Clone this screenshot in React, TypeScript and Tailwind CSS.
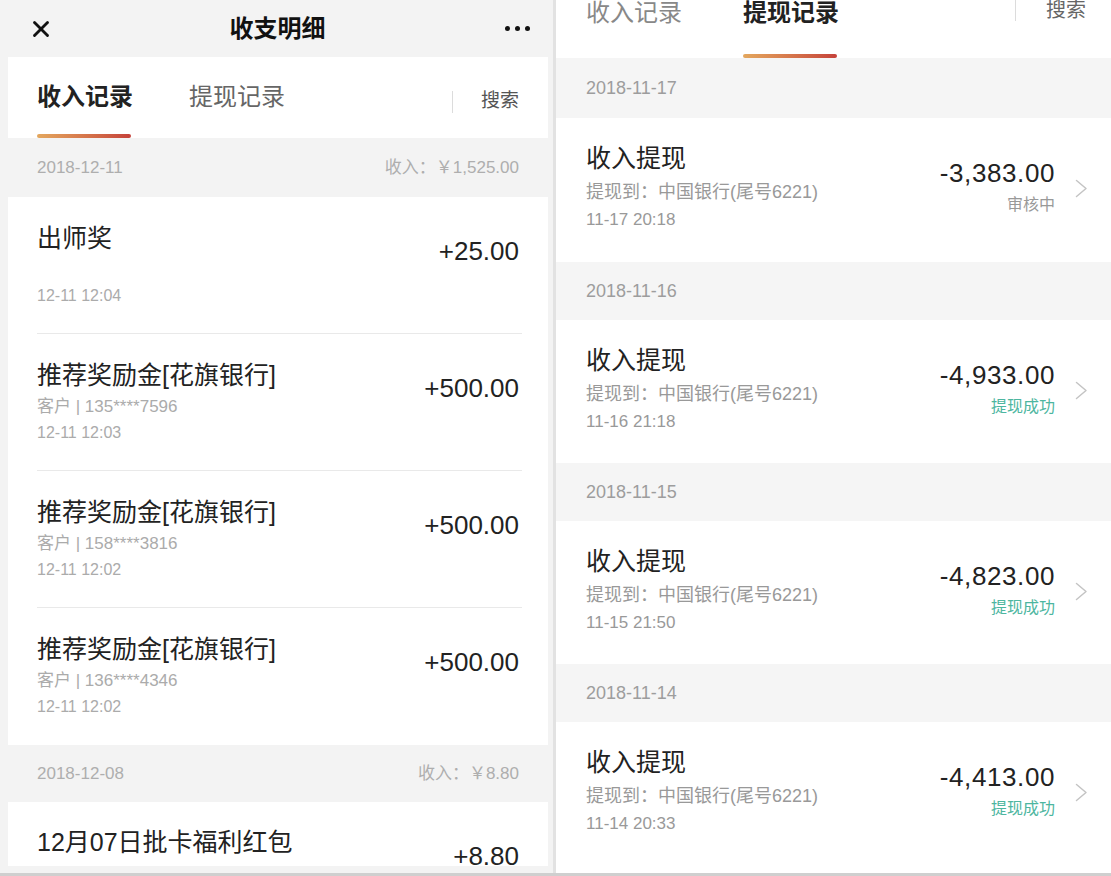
import { X } from "lucide-react";

const font = "font-['Liberation_Sans','Noto_Sans_CJK_SC',sans-serif]";

interface IncomeItem {
  title: string;
  sub?: string;
  time: string;
  amount: string;
}

interface Withdrawal {
  date: string;
  time: string;
  amount: string;
  status: string;
  ok: boolean;
  dateH: string;
  itemH: string;
}

const incomeA: IncomeItem[] = [
  { title: "出师奖", time: "12-11 12:04", amount: "+25.00" },
  { title: "推荐奖励金[花旗银行]", sub: "客户 | 135****7596", time: "12-11 12:03", amount: "+500.00" },
  { title: "推荐奖励金[花旗银行]", sub: "客户 | 158****3816", time: "12-11 12:02", amount: "+500.00" },
  { title: "推荐奖励金[花旗银行]", sub: "客户 | 136****4346", time: "12-11 12:02", amount: "+500.00" },
];

const withdrawals: Withdrawal[] = [
  { date: "2018-11-17", time: "11-17 20:18", amount: "-3,383.00", status: "审核中", ok: false, dateH: "h-[60px]", itemH: "h-[144px]" },
  { date: "2018-11-16", time: "11-16 21:18", amount: "-4,933.00", status: "提现成功", ok: true, dateH: "h-[58px]", itemH: "h-[143px]" },
  { date: "2018-11-15", time: "11-15 21:50", amount: "-4,823.00", status: "提现成功", ok: true, dateH: "h-[58px]", itemH: "h-[143px]" },
  { date: "2018-11-14", time: "11-14 20:33", amount: "-4,413.00", status: "提现成功", ok: true, dateH: "h-[58px]", itemH: "h-[151px]" },
];

const Underline = () => (
  <div className="h-[4px] w-[94px] rounded-full bg-gradient-to-r from-[#e3a75e] to-[#c5413a]" />
);

const IncomeRow = ({ item, last }: { item: IncomeItem; last?: boolean }) => (
  <div className={`flex justify-between h-[137px] ${last ? "" : "border-b border-[#e9e9e9]"}`}>
    <div className="flex flex-col pt-[27px]">
      <div className="text-[25px] leading-[28px] text-[#222]">{item.title}</div>
      <div className="mt-[6px] h-[24px] text-[17px] leading-[24px] text-[#ababab]">{item.sub}</div>
      <div className="mt-[3px] text-[16px] leading-[22px] text-[#ababab]">{item.time}</div>
    </div>
    <div className="pt-[40px] mr-[3px] text-[26px] leading-[28px] text-[#222]">{item.amount}</div>
  </div>
);

const Chevron = () => (
  <svg width="13" height="19" viewBox="0 0 13 19" fill="none">
    <path d="M1.5 1.5 L11 9.5 L1.5 17.5" stroke="#c4c4c4" strokeWidth="1.5" strokeLinecap="round" strokeLinejoin="round" />
  </svg>
);

const LeftPanel = () => (
  <div className="w-[553px] h-full bg-[#f3f3f3] flex flex-col overflow-hidden">
    {/* nav bar */}
    <div className="h-[57px] shrink-0 flex items-center justify-between pl-[28px] pr-[23px]">
      <X size={26} strokeWidth={2.6} className="text-[#111]" />
      <div className="text-[24px] font-bold text-[#111] leading-[28px] -ml-[4px]">收支明细</div>
      <div className="flex gap-[5px] items-center">
        <span className="w-[5px] h-[5px] rounded-full bg-[#111]" />
        <span className="w-[5px] h-[5px] rounded-full bg-[#111]" />
        <span className="w-[5px] h-[5px] rounded-full bg-[#111]" />
      </div>
    </div>

    {/* tabs */}
    <div className="ml-[8px] mr-[5px] h-[81px] shrink-0 bg-white flex pl-[29px] pr-[29px]">
      <div className="flex flex-col">
        <div className="pt-[26px] text-[24px] leading-[28px] font-bold text-[#222]">收入记录</div>
        <div className="mt-auto">
          <Underline />
        </div>
      </div>
      <div className="ml-[56px] pt-[26px] text-[24px] leading-[28px] text-[#666]">提现记录</div>
      <div className="ml-auto flex items-center gap-[28px] pt-[8px]">
        <div className="w-px h-[22px] bg-[#dcdcdc]" />
        <div className="text-[19px] text-[#555]">搜索</div>
      </div>
    </div>

    <div className="h-[59px] shrink-0 flex items-center justify-between pl-[37px] pr-[34px] text-[17px] text-[#aeaeae]">
      <span>2018-12-11</span>
      <span>收入：￥1,525.00</span>
    </div>

    <div className="ml-[8px] mr-[5px] bg-white pl-[29px] pr-[26px] shrink-0">
      {incomeA.map((it, i) => (
        <IncomeRow key={i} item={it} last={i === incomeA.length - 1} />
      ))}
    </div>

    <div className="h-[57px] shrink-0 flex items-center justify-between pl-[37px] pr-[34px] text-[17px] text-[#aeaeae]">
      <span>2018-12-08</span>
      <span>收入：￥8.80</span>
    </div>

    <div className="ml-[8px] mr-[5px] bg-white pl-[29px] pr-[26px] h-[64px] shrink-0 overflow-hidden">
      <div className="flex justify-between">
        <div className="pt-[26px] text-[25px] leading-[28px] text-[#222]">12月07日批卡福利红包</div>
        <div className="pt-[40px] mr-[3px] text-[26px] leading-[28px] text-[#222]">+8.80</div>
      </div>
    </div>
  </div>
);

const RightPanel = () => (
  <div className="flex-1 h-full bg-[#f5f5f5] flex flex-col overflow-hidden">
    {/* tabs */}
    <div className="h-[58px] shrink-0 bg-white flex pl-[30px] pr-[25px]">
      <div className="pt-[1px] text-[24px] leading-[24px] text-[#888]">收入记录</div>
      <div className="ml-[61px] flex flex-col">
        <div className="pt-[1px] text-[24px] leading-[24px] font-bold text-[#222]">提现记录</div>
        <div className="mt-auto">
          <Underline />
        </div>
      </div>
      <div className="ml-auto flex items-start gap-[30px]">
        <div className="w-px h-[21px] bg-[#dcdcdc]" />
        <div className="text-[20px] leading-[20px] text-[#666]">搜索</div>
      </div>
    </div>

    {withdrawals.map((w) => (
      <div key={w.date} className="flex flex-col shrink-0">
        <div className={`${w.dateH} flex items-center px-[30px] text-[18px] text-[#9d9d9d]`}>{w.date}</div>
        <div className={`${w.itemH} bg-white flex items-start pl-[30px] pr-[23px]`}>
          <div className="flex flex-col pt-[26px]">
            <div className="text-[25px] leading-[28px] text-[#222]">收入提现</div>
            <div className="mt-[8px] text-[18px] leading-[24px] text-[#999]">提现到：中国银行(尾号6221)</div>
            <div className="mt-[4px] text-[17px] leading-[24px] text-[#999]">{w.time}</div>
          </div>
          <div className="ml-auto flex flex-col items-end pt-[40px]">
            <div className="text-[26px] leading-[30px] tracking-[0.6px] text-[#222]">{w.amount}</div>
            <div className={`mt-[6px] text-[16px] leading-[22px] ${w.ok ? "text-[#4db6a0]" : "text-[#999]"}`}>{w.status}</div>
          </div>
          <div className="ml-[20px] mt-[61px]">
            <Chevron />
          </div>
        </div>
      </div>
    ))}
  </div>
);

export default function App() {
  return (
    <div className={`w-[1111px] h-[876px] flex flex-col bg-[#f3f3f3] ${font}`}>
      <div className="h-[873px] flex">
        <LeftPanel />
        <div className="w-[3px] h-full bg-[#e2e2e2]" />
        <RightPanel />
      </div>
      <div className="h-[3px] bg-[#cfcfcf]" />
    </div>
  );
}
